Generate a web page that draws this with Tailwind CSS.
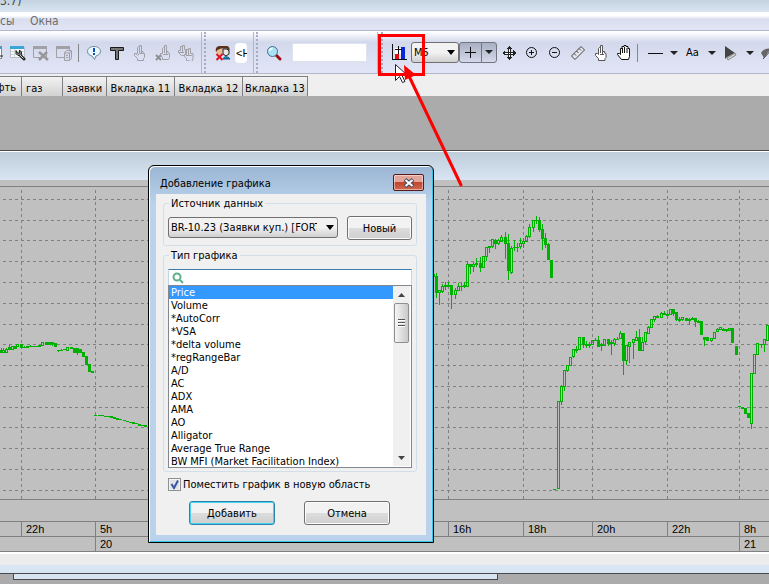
<!DOCTYPE html>
<html lang="ru">
<head>
  <meta charset="UTF-8" />
  <title>Добавление графика</title>
  <script src="https://cdn.jsdelivr.net/npm/@tailwindcss/browser@4"></script>
</head>
<body class="relative min-h-screen overflow-hidden flex flex-col bg-[#ababab] text-black text-[11px] leading-[13px] font-['DejaVu_Sans_Condensed','Noto_Sans',sans-serif]">

  <!-- Title bar -->
  <header class="h-3 overflow-hidden bg-linear-to-b from-[#c4d2e0] to-[#d9e6f1] text-[#444]">
    <span class="block -mt-[7px] text-[12px] leading-4">3.7)</span>
  </header>

  <!-- Menu -->
  <nav class="h-[19px] flex items-center gap-4 pt-px border-b border-[#b3b7cc] bg-linear-to-b from-white from-20% via-[#d9deef] via-40% to-[#e2e5f5] text-[12px] text-[#6d6d6d]">
    <a href="#" class="w-3.5">сы</a>
    <a href="#">Окна</a>
  </nav>

  <!-- Toolbars -->
  <div class="h-[43px] flex border-t border-b border-t-white border-b-[#b3b7cc] bg-linear-to-b from-white from-0% via-[#d3d9ec] via-25% to-[#e1e5f6]">
    <div class="w-[202px] shrink-0 flex items-center overflow-hidden border-r border-[#b3b7cc]">
      <button class="-ml-[17px] w-[23px] h-6 shrink-0 flex items-center justify-center" aria-label="Таблица">
        <svg width="16" height="16"><rect x="1.500" y="1.500" width="13" height="12" fill="#fff" stroke="#888" /><path d="M1 2h14v2H1z" fill="#3aa0d8" /><path d="M12 7v8M9 11h7" stroke="#222" stroke-width="1" /></svg>
      </button>
      <button class="w-[23px] h-6 shrink-0 flex items-center justify-center" aria-label="Настройка таблицы">
        <svg width="16" height="16"><path d="M.5 2.500h14v10H.5z" fill="#f6f8fa" stroke="#b8bfc8" /><path d="M0 1h14v3H0z" fill="#3aa5d8" /><path d="M1 6.500h13M1 9.500h13M4.500 4v8" stroke="#cfd6dd" /><path d="M10 10l4 4" stroke="#222" stroke-width="3" stroke-linecap="round" /><path d="M6 5.500v3l2 2h2.500l1-1.500V7L9.500 5v3h-2z" fill="#777" stroke="#222" /><path d="M10 10l3.500 3.500" stroke="#ccc" /></svg>
      </button>
      <button class="w-[23px] h-6 shrink-0 flex items-center justify-center" aria-label="Удалить окно" disabled>
        <svg width="16" height="16"><path d="M.5 2.500h13v10H.5z" fill="none" stroke="#a0a0a6" /><path d="M0 1h14v3H0z" fill="#a0a0a6" /><path d="M6 7l9 8M14 7l-8 8" stroke="#97979d" stroke-width="2.500" /></svg>
      </button>
      <button class="w-[23px] h-6 shrink-0 flex items-center justify-center" aria-label="База данных" disabled>
        <svg width="16" height="16"><path d="M.5 2.500h13v10H.5z" fill="none" stroke="#a0a0a6" /><path d="M0 1h14v3H0z" fill="#a0a0a6" /><path d="M8.500 7.500l2-2h5v8l-2 2h-5z" fill="#d5daea" stroke="#a0a0a6" /><path d="M8.500 8h5v7M13.500 8l2-2M10 10.500h2M10 12.500h2" fill="none" stroke="#a0a0a6" /></svg>
      </button>
      <span class="mx-[3px] w-px h-[18px] shrink-0 bg-[#85878f]"></span>
      <button class="w-[23px] h-6 shrink-0 flex items-center justify-center" aria-label="Сообщение">
        <svg width="16" height="16"><path d="M8 1.500c3.800 0 6.500 2 6.500 4.800 0 2.600-2 4-4.500 4.700L8.500 14.500 6 11C3.500 10.400 1.500 9 1.500 6.300 1.500 3.500 4.200 1.500 8 1.500z" fill="#e9f6fc" stroke="#6f8896" /><path d="M7 3h2v4H7zM7 8h2v2H7z" fill="#0a50c0" /></svg>
      </button>
      <button class="w-[23px] h-6 shrink-0 flex items-center justify-center" aria-label="Текст">
        <svg width="16" height="16"><path d="M1.500 2.500h13v3h-5v9h-3v-9h-5z" fill="#777" stroke="#1a1a1a" /></svg>
      </button>
      <button class="w-[23px] h-6 shrink-0 flex items-center justify-center" aria-label="Жест" disabled>
        <svg width="16" height="16" fill="none" stroke="#a0a0a6"><path d="M5.500 15.500v-2l-3-3V8.500h2v1l1-1v-6l1-1h1v5-6h2v6h1.500V8l1.500.5v4l-1 1v2zM7.500 3v5M9.500 6v3M5.500 10.500l2-2h4" /></svg>
      </button>
      <button class="w-[23px] h-6 shrink-0 flex items-center justify-center" aria-label="Отменить жест" disabled>
        <svg width="16" height="16" fill="none" stroke="#a0a0a6"><path d="M7.500 14.500v-2l-2-2V8.500h2v-5l1-1h1v4-6h2v6h1.500V8l1.500.5v4l-1 2zM9.500 3v5M11.500 6v3M8 9.500h5" /><path d="M1 10l5 5M6 10l-5 5" stroke="#8f8f95" stroke-width="2" /></svg>
      </button>
      <button class="w-[23px] h-6 shrink-0 flex items-center justify-center" aria-label="Все жесты" disabled>
        <svg width="16" height="16" fill="none" stroke="#a0a0a6"><path d="M3.500 10.500l-3-3V5.500h2v-4h2v3-4h2v4h1v4l-1 2zM4.500 3v4M1 7.500h5" /><path d="M8.500 15.500v-2l-2-2v-2h2v-5h2v3-4h2v5h2.500v5l-1 3zM10.500 7v3M8 10.500h6" /></svg>
      </button>
    </div>

    <div class="w-[52px] shrink-0 flex items-center border-r border-[#b3b7cc]">
      <span class="ml-[2px] mr-[7px] h-full border-l-2 border-dotted border-[#a5abc2]"></span>
      <button class="w-5 h-6 shrink-0 flex items-center justify-center" aria-label="Удалить пользователя">
        <svg width="16" height="16"><circle cx="4.500" cy="6" r="3.500" fill="#edbd92" /><path d="M1 7C0 3 2 1 5 1h6c3 0 4 2 3.500 5L12 3.500H6L2.500 5z" fill="#5a301c" /><path d="M8 4h4l2 2v3l-3 2-3-2z" fill="#e8e4df" stroke="#222" /><path d="M8 14c1-3 5-3 7 0z" fill="#1489c0" stroke="#0a5a85" /><path d="M1.500 9l6 6M7.500 9l-6 6" stroke="#e01020" stroke-width="2" /></svg>
      </button>
      <span class="ml-[2px] w-3 h-5 shrink-0 rounded-sm bg-white pl-px overflow-hidden whitespace-nowrap leading-5 font-['Liberation_Sans',sans-serif]">&lt;Н</span>
    </div>

    <div class="w-[124px] shrink-0 flex items-center border-r border-[#b3b7cc]">
      <span class="ml-[2px] mr-2 h-full border-l-2 border-dotted border-[#a5abc2]"></span>
      <button class="w-4 h-6 shrink-0 flex items-center justify-center" aria-label="Поиск">
        <svg width="16" height="16"><path d="M10 10l4 4" stroke="#9b1010" stroke-width="3" stroke-linecap="round" /><circle cx="6.500" cy="6.500" r="5" fill="#a9e4f5" stroke="#4a6a90" /><path d="M3.500 6a3 3 0 0 1 3-2.500" fill="none" stroke="#fff" stroke-width="1.500" /></svg>
      </button>
      <input type="text" aria-label="Поиск" class="ml-[10px] w-[75px] h-[19px] min-w-0 border border-[#dfe3ef] bg-white" />
    </div>

    <div class="flex-1 min-w-0 flex items-center overflow-hidden">
      <span class="ml-[3px] mr-2 h-full border-l-2 border-dotted border-[#a5abc2]"></span>
      <button class="w-4 h-6 shrink-0 flex items-center justify-center" aria-label="Добавить график">
        <svg width="16" height="17" shape-rendering="crispEdges"><path d="M1 0v15h15" fill="none" stroke="#111" /><path d="M4 9h4v6H4z" fill="#e01010" /><path d="M10 3h4v12h-4z" fill="#0828d8" /><path d="M4 4h6v6H4z" fill="#fff" /><path d="M7.500 2v8M4 5.500h7" stroke="#111" /></svg>
      </button>
      <span class="relative ml-[4px] w-[48px] h-[21px] shrink-0">
        <select aria-label="Интервал" class="appearance-none w-full h-full rounded-[3px] border border-[#707070] bg-linear-to-b from-[#f2f2f2] from-50% to-[#cfcfcf] pl-[2px] text-[11px]">
          <option>M5</option>
        </select>
        <svg class="absolute right-1 top-2 pointer-events-none" width="8" height="5"><path d="M0 0h8L4 5z" /></svg>
      </span>
      <button class="w-[23px] h-[21px] shrink-0 flex items-center justify-center rounded-l-[3px] border border-[#70757f] bg-linear-to-b from-[#a9b0c3] to-[#d3d9ea]" aria-label="Перекрестие">
        <svg width="11" height="11" shape-rendering="crispEdges"><path d="M5.500 0v11M0 5.500h11" stroke="#111" /></svg>
      </button>
      <button class="-ml-px w-4 h-[21px] shrink-0 flex items-center justify-center rounded-r-[3px] border border-[#70757f] bg-linear-to-b from-[#a9b0c3] to-[#d3d9ea]" aria-label="Виды курсора">
        <svg width="8" height="5"><path d="M0 0h8L4 4z" fill="#222" /></svg>
      </button>
      <button class="w-[23px] h-6 shrink-0 flex items-center justify-center" aria-label="Переместить">
        <svg width="14" height="14" shape-rendering="crispEdges"><path d="M6 2h2v10H6zM2 6h10v2H2z" fill="#fff" stroke="#222" stroke-width="1" /><path d="M7 0l3 3H4zM7 14l3-3H4zM0 7l3-3v6zM14 7l-3-3v6z" fill="#222" /></svg>
      </button>
      <button class="w-[23px] h-6 shrink-0 flex items-center justify-center" aria-label="Увеличить">
        <svg width="13" height="13" fill="none" stroke="#111"><circle cx="6.500" cy="6.500" r="5" /><path d="M6.500 4v5M4 6.500h5" /></svg>
      </button>
      <button class="w-[23px] h-6 shrink-0 flex items-center justify-center" aria-label="Уменьшить">
        <svg width="13" height="13" fill="none" stroke="#111"><circle cx="6.500" cy="6.500" r="5" /><path d="M4 6.500h5" /></svg>
      </button>
      <button class="w-[23px] h-6 shrink-0 flex items-center justify-center" aria-label="Линейка">
        <svg width="16" height="16" fill="#e4e6ee" stroke="#444"><path d="M1.500 11L11 1.500 14.500 5 5 14.500zM4 8.500l2 2M6.500 6l2 2M9 3.500l2 2" /></svg>
      </button>
      <button class="w-[23px] h-6 shrink-0 flex items-center justify-center" aria-label="Указать">
        <svg width="16" height="16" fill="#fff" stroke="#555"><path d="M5.500 15.500v-2l-3-3V8.500h2l1 1v-6l1-1h1v4-6h2v6h2V8l1.500.5v4l-1 1v2zM7.500 3v5M9.500 6v3M7 9.500h4" /></svg>
      </button>
      <button class="w-[23px] h-6 shrink-0 flex items-center justify-center" aria-label="Рука">
        <svg width="16" height="16" fill="#fff" stroke="#111"><path d="M5.500 14.500l-4-5v-1h2l1 1v-6h1.500v-2H8v-1h2v1h2v2h1.500v8l-1 3zM6.500 3v5M8.500 2v6M11 3v5" /></svg>
      </button>
      <span class="ml-[2px] mr-[5px] w-px h-[18px] shrink-0 bg-[#85878f]"></span>
      <button class="w-[38px] h-6 shrink-0 flex items-center" aria-label="Линия">
        <svg width="38" height="16"><path d="M5 8.500h15" stroke="#111" /><path d="M27 6h8l-4 4z" fill="#222" /></svg>
      </button>
      <button class="w-[38px] h-6 shrink-0 flex items-center pl-[5px]" aria-label="Шрифт">
        <span class="w-[22px] text-left">Aa</span>
        <svg width="8" height="4"><path d="M0 0h8L4 4z" fill="#222" /></svg>
      </button>
      <button class="w-[38px] h-6 shrink-0 flex items-center" aria-label="Фигура">
        <svg width="38" height="16"><path d="M6 1l10 7-8 4-2 2z" fill="#444" /><path d="M8 13l8-5 1 2-8 5z" fill="#d4d4d4" stroke="#888" /><path d="M27 6h8l-4 4z" fill="#222" /></svg>
      </button>
      <button class="w-[38px] h-6 shrink-0 flex items-center" aria-label="Скрыть">
        <svg width="38" height="16"><path d="M4 8c3-5 9-6 14-2l-3 1c-2-1-4-1-5 2l-3 4z" fill="#666" /><path d="M6 14L16 3" stroke="#444" /></svg>
      </button>
    </div>
  </div>

  <!-- Workspace tabs -->
  <div class="flex pt-[2px] bg-[#efefef]">
    <button class="w-[21px] h-5 pt-1 pr-[5px] flex justify-end border-t border-[#7c7e84] bg-linear-to-b from-[#f2f2f2] to-[#d2d2d2] overflow-hidden">фть</button>
    <button class="w-[41px] h-5 pt-1 pl-1 text-left border-t border-l border-[#7c7e84] bg-linear-to-b from-[#f2f2f2] to-[#d2d2d2]">газ</button>
    <button class="w-11 h-5 pt-1 border-t border-l border-[#7c7e84] bg-linear-to-b from-[#f2f2f2] to-[#d2d2d2] whitespace-nowrap">заявки</button>
    <button class="w-[68px] h-5 pt-1 border-t border-l border-[#7c7e84] bg-linear-to-b from-[#f2f2f2] to-[#d2d2d2] whitespace-nowrap">Вкладка 11</button>
    <button class="w-[68px] h-5 pt-1 border-t border-l border-[#7c7e84] bg-linear-to-b from-[#f2f2f2] to-[#d2d2d2] whitespace-nowrap">Вкладка 12</button>
    <button class="w-[66px] h-5 pt-1 border-t border-x border-[#7c7e84] bg-linear-to-b from-[#f2f2f2] to-[#d2d2d2] whitespace-nowrap">Вкладка 13</button>
  </div>

  <!-- Chart window -->
  <main class="mt-[54px] border-y border-[#4a4a4e] bg-[#c0c0c0]">
    <div class="h-[29px] border-t border-white bg-linear-to-b from-[#bfcddb] to-[#d9e5f3]"></div>
    <svg class="block w-full h-[319px]" shape-rendering="crispEdges">
      <path d="M0 6.500h4000" stroke="#808080" />
      <g id="grid" stroke="#808080" stroke-dasharray="3 3"></g>
      <g id="candles" transform="translate(0 -180)" fill="#00b000"></g>
    </svg>
    <div class="h-[23px] border-y border-[#808080]"></div>
    <div class="flex h-[15px] border-b border-[#808080] font-['Liberation_Sans',sans-serif] text-[11px] leading-[15px]">
      <span class="w-[21px] shrink-0"></span>
      <span class="w-[74px] shrink-0 border-l border-[#808080] pl-1">22h</span>
      <span class="w-[353px] shrink-0 border-l border-[#808080] pl-1">5h</span>
      <span class="w-[75px] shrink-0 border-l border-[#808080] pl-1">16h</span>
      <span class="w-[69px] shrink-0 border-l border-[#808080] pl-1">18h</span>
      <span class="w-[75px] shrink-0 border-l border-[#808080] pl-1">20h</span>
      <span class="w-[72px] shrink-0 border-l border-[#808080] pl-1">22h</span>
      <span class="flex-1 border-l border-[#808080] pl-1">8h</span>
    </div>
    <div class="flex h-[15px] border-b border-[#808080] font-['Liberation_Sans',sans-serif] text-[11px] leading-[15px]">
      <span class="w-[95px] shrink-0"></span>
      <span class="w-[644px] shrink-0 border-l border-[#808080] pl-1">20</span>
      <span class="flex-1 border-l border-[#808080] pl-1">21</span>
    </div>
    <div class="h-[13px] border-t-2 border-white bg-[#ececec]"></div>
    <div class="h-2 bg-[#d8e5f2]"></div>
  </main>
  <div class="ml-[13px] w-[485px] h-[6px] border border-t-0 border-[#4a4a4e] bg-[#d8e5f2]"></div>

  <!-- Add chart dialog -->
  <section role="dialog" aria-labelledby="dialogTitle" class="absolute left-[148px] top-[165px] w-[286px] rounded-t-md border border-black bg-[#bad2eb] bg-linear-to-b from-[#9ab5d3] from-0% via-[#bad2eb] via-10% to-[#bad2eb] shadow-[inset_1px_1px_0_#fff,inset_-1px_-1px_0_#35c8e8] px-[7px] pb-[7px]">
    <div class="h-7 flex items-center justify-between pl-1 pr-[2px] pt-[5px]">
      <h1 id="dialogTitle" class="pt-px text-[11px]">Добавление графика</h1>
      <button aria-label="Закрыть" class="w-[31px] h-[17px] flex items-center justify-center rounded-[2px] border border-[#5a1a18] bg-linear-to-b from-[#e3a59a] from-45% via-[#c4432c] via-50% to-[#cf6a50] shadow-[inset_0_0_0_1px_#ffffff77]">
        <svg width="12" height="10"><path d="M2 1.500l8 7M10 1.500l-8 7" stroke="#444a60" stroke-width="4" /><path d="M2.500 2l7 6M9.500 2l-7 6" stroke="#fff" stroke-width="2" /></svg>
      </button>
    </div>

    <form class="h-[341px] bg-[#f0f0f0] pl-[7px] pr-[9px] pt-[3px]">
      <fieldset class="h-[49px] px-1 rounded-[3px] border border-[#d3dfe8]">
        <legend class="px-[2px] ml-px">Источник данных</legend>
        <div class="flex items-start justify-between pt-[6px]">
          <span class="relative mt-px w-[170px] h-[21px]">
            <select aria-label="Источник данных" class="appearance-none w-full h-full rounded-[3px] border border-[#707070] bg-linear-to-b from-[#f2f2f2] from-50% to-[#cfcfcf] pl-[2px] pr-5 text-[11px] whitespace-nowrap overflow-hidden">
              <option>BR-10.23 (Заявки куп.) [FORTS]</option>
            </select>
            <svg class="absolute right-1 top-2 pointer-events-none" width="8" height="5"><path d="M0 0h8L4 5z" /></svg>
          </span>
          <button type="button" class="w-[65px] h-6 rounded-[3px] border border-[#707070] bg-linear-to-b from-[#f2f2f2] from-50% via-[#dddddd] via-50% to-[#cfcfcf] shadow-[inset_0_0_0_1px_#fcfcfc]">Новый</button>
        </div>
      </fieldset>

      <fieldset class="mt-[3px] h-[223px] px-1 rounded-[3px] border border-[#d3dfe8]">
        <legend class="px-[2px] ml-px">Тип графика</legend>
        <div class="pt-[7px]">
          <label class="flex items-center h-4 pl-[3px] border border-b-0 border-[#c4d5e6] border-t-[#3d7bad] bg-white">
            <svg width="12" height="12"><circle cx="5" cy="5" r="3.500" fill="none" stroke="#5fb08c" stroke-width="2" /><path d="M8 8l3 3" stroke="#5fb08c" stroke-width="2" /></svg>
            <input type="text" aria-label="Поиск типа графика" class="flex-1 min-w-0 h-3 outline-none" />
          </label>
          <div class="flex h-[183px] border border-[#828790] bg-white">
            <ul role="listbox" aria-label="Тип графика" class="flex-1 min-w-0 overflow-hidden whitespace-nowrap">
              <li role="option" aria-selected="true" class="pl-[2px] bg-[#3399ff] text-white">Price</li>
              <li role="option" class="pl-[2px]">Volume</li>
              <li role="option" class="pl-[2px]">*AutoCorr</li>
              <li role="option" class="pl-[2px]">*VSA</li>
              <li role="option" class="pl-[2px]">*delta volume</li>
              <li role="option" class="pl-[2px]">*regRangeBar</li>
              <li role="option" class="pl-[2px]">A/D</li>
              <li role="option" class="pl-[2px]">AC</li>
              <li role="option" class="pl-[2px]">ADX</li>
              <li role="option" class="pl-[2px]">AMA</li>
              <li role="option" class="pl-[2px]">AO</li>
              <li role="option" class="pl-[2px]">Alligator</li>
              <li role="option" class="pl-[2px]">Average True Range</li>
              <li role="option" class="pl-[2px]">BW MFI (Market Facilitation Index)</li>
            </ul>
            <div class="w-[17px] mb-px mr-px flex flex-col items-center bg-[#f0f0f0]">
              <svg class="shrink-0" width="17" height="17"><path d="M5 11h7l-3.500-4z" fill="#444" /></svg>
              <div class="w-[15px] h-10 shrink-0 flex flex-col items-center justify-center gap-px rounded-[2px] border border-[#8f8f8f] bg-linear-to-r from-[#f5f5f5] to-[#c9c9cb]">
                <span class="w-[7px] h-[2px] border-t border-[#555] bg-white"></span>
                <span class="w-[7px] h-[2px] border-t border-[#555] bg-white"></span>
                <span class="w-[7px] h-[2px] border-t border-[#555] bg-white"></span>
              </div>
              <svg class="mt-auto shrink-0" width="17" height="17"><path d="M5 7h7l-3.500 4z" fill="#444" /></svg>
            </div>
          </div>
        </div>
      </fieldset>

      <label class="relative mt-[6px] ml-[5px] flex items-center gap-[2px] whitespace-nowrap">
        <input type="checkbox" checked class="appearance-none w-[13px] h-[13px] border border-[#8e8f8f] bg-[#dfe3e8] shadow-[inset_0_0_0_1px_#f4f4f4]" />
        <svg class="absolute left-0 top-0 pointer-events-none" width="13" height="13"><path d="M3.500 6l2.500 4 4-7.500" fill="none" stroke="#3b55a0" stroke-width="2" /></svg>
        Поместить график в новую область
      </label>

      <div class="flex gap-[29px] mt-[10px] ml-[26px]">
        <button type="submit" class="w-[86px] h-6 shrink-0 rounded-[3px] border border-[#2a87a8] bg-linear-to-b from-[#f2f2f2] from-50% via-[#dddddd] via-50% to-[#cfcfcf] shadow-[inset_0_0_0_1px_#48d0f5]">Добавить</button>
        <button type="button" class="w-[86px] h-6 shrink-0 rounded-[3px] border border-[#707070] bg-linear-to-b from-[#f2f2f2] from-50% via-[#dddddd] via-50% to-[#cfcfcf] shadow-[inset_0_0_0_1px_#fcfcfc]">Отмена</button>
      </div>
    </form>
  </section>

  <!-- Pointer and red marker over the toolbar -->
  <svg class="absolute left-0 top-0 w-full h-[200px] pointer-events-none">
    <path d="M395.500 64.500v16l4-4 3 6 2.500-1-3-6h5.500z" fill="#fff" stroke="#223" />
    <rect x="379.500" y="35.500" width="44" height="39" fill="none" stroke="#f00" stroke-width="3" />
    <path d="M461 185L408 74" stroke="#f00" stroke-width="3" stroke-linecap="round" />
    <path d="M404 65l12 10-11 5z" fill="#f00" />
  </svg>

  <script>
    const SVG = 'http://www.w3.org/2000/svg';
    const grid = document.getElementById('grid');
    const candles = document.getElementById('candles');

    function addPath(parent, d) {
      const path = document.createElementNS(SVG, 'path');
      path.setAttribute('d', d);
      parent.appendChild(path);
    }

    [199, 220, 240, 261, 282, 303, 324, 344, 365, 386, 407, 427, 448, 469, 490].forEach(y => {
      addPath(grid, `M3 ${y - 179.5}H4000`);
    });
    [21, 95, 448, 523, 592, 667, 739].forEach(x => {
      addPath(grid, `M${x + 0.5} 10V319`);
    });

    // x, high, top, bottom, low, filled
    const data = [
      [0,348,350,352,352,1],[2,348,350,352,352,0],[5,348,349,352,352,0],[8,345,347,349,349,1],[11,346,346,349,349,0],[14,346,346,348,348,1],[16,344,344,346,346,0],
      [20,344,344,347,347,1],[23,346,347,347,347,0],[26,346,346,347,347,1],[29,345,346,346,346,0],[32,346,346,346,346,0],[35,346,346,346,346,0],
      [38,345,345,346,346,0],[41,342,342,345,345,0],[45,342,342,344,344,1],[48,342,342,344,344,1],[51,342,342,343,345,1],[54,343,343,346,346,1],
      [57,350,350,350,351,0],[60,349,350,350,350,0],[63,349,349,349,349,0],[66,347,347,350,350,0],[70,347,347,348,348,1],[73,348,348,352,352,1],
      [76,348,348,352,354,1],[79,349,349,352,352,1],[82,352,352,356,356,1],[85,356,356,364,364,1],[88,364,364,371,371,1],[91,371,371,372,372,1],
      [94,415,415,415,415,0],[98,415,415,415,415,0],[101,415,415,415,415,0],[104,416,416,416,416,0],[107,416,416,416,416,0],[110,416,416,417,417,1],[113,417,417,418,418,1],
      [116,418,418,419,419,1],[119,419,419,419,419,0],[123,420,420,420,420,0],[126,421,421,421,421,0],[129,422,422,422,422,0],[132,422,422,423,423,1],[135,423,423,423,423,0],
      [138,424,424,425,425,1],[141,425,425,425,425,0],[144,425,425,426,426,1],
      [432,272,274,276,276,1],[435,273,276,292,297,1],[438,290,290,292,304,0],[441,284,286,291,292,0],[444,282,285,286,289,0],[447,282,285,286,286,0],[450,285,285,294,308,1],
      [454,288,290,294,298,0],[457,283,286,290,290,0],[460,283,286,286,290,0],[463,282,285,286,287,0],[466,261,264,286,286,0],[469,264,264,266,273,1],[472,262,264,266,271,0],
      [475,258,263,264,266,0],[479,257,263,267,271,1],[482,256,256,267,267,0],[485,247,247,256,260,0],[488,246,246,247,252,0],[491,239,239,246,247,0],[494,239,240,243,248,1],
      [497,239,240,243,244,0],[500,235,237,241,241,0],[504,232,237,243,258,1],[507,234,243,270,279,1],[510,246,248,272,273,0],[513,240,247,247,250,0],[516,243,247,247,251,0],
      [519,238,243,246,248,0],[522,238,241,243,247,0],[525,235,236,241,241,0],[528,224,227,236,237,0],[532,220,220,227,231,0],[535,216,220,220,223,0],[538,217,220,229,231,1],
      [541,224,229,238,249,1],[544,233,238,244,247,1],[547,243,244,259,259,1],[550,260,260,277,277,1],
      [553,489,489,489,489,0],[557,401,401,488,488,0],[560,385,386,401,404,0],[563,370,370,386,390,0],[566,365,365,370,371,0],[569,357,357,365,365,0],[572,349,349,356,357,0],
      [575,346,349,350,352,0],[578,337,337,349,349,0],[582,337,337,344,347,1],[585,341,344,345,347,0],[588,342,344,345,347,0],[591,340,340,344,344,0],[594,338,340,340,340,0],
      [597,336,340,346,346,1],[600,343,344,345,350,0],[603,339,339,345,345,0],[607,339,339,343,345,1],[610,340,342,343,354,0],[613,338,339,343,345,0],[616,337,339,339,339,0],
      [619,331,333,338,338,0],[622,333,333,360,374,1],[625,345,345,360,364,0],[628,342,342,346,362,0],[632,339,339,342,358,0],[635,331,337,340,340,0],[638,329,337,350,350,1],
      [641,337,342,350,350,0],[644,332,332,341,344,0],[647,326,327,333,333,0],[650,319,319,327,327,0],[653,316,316,319,321,0],[656,315,316,317,317,0],[660,312,313,317,317,0],
      [663,311,313,314,314,0],[666,313,314,315,315,0],[669,309,309,314,314,0],[672,309,309,313,315,1],[675,312,312,319,320,1],[678,317,319,320,321,0],[681,317,317,319,320,0],
      [685,318,318,320,320,1],[688,318,319,320,324,0],[691,317,318,319,319,0],[694,318,318,321,326,1],[697,320,321,322,322,1],[700,321,321,334,334,1],[703,337,337,339,345,1],
      [706,337,337,340,340,1],[710,338,338,340,341,0],[713,332,332,338,338,0],[716,328,329,331,331,0],[719,327,327,329,329,0],[722,328,329,330,330,0],[725,329,329,330,331,0],
      [728,328,328,330,330,0],[731,328,328,342,342,1],[735,346,346,354,354,1],[738,406,406,406,406,0],[741,407,407,408,408,1],[744,408,408,413,413,1],[747,413,413,417,417,1],
      [750,373,373,423,428,0],[753,354,354,373,373,0],[756,343,343,354,354,0],[760,344,344,344,347,0],[763,339,339,344,351,0],[766,325,325,340,340,0]
    ];

    data.forEach(([x, high, top, bottom, low, filled]) => {
      let d = `M${x + 1} ${high}h1V${top}h-1zM${x + 1} ${bottom}h1V${low + 1}h-1z`;
      d += `M${x} ${top}h3V${bottom + 1}h-3z`;
      if (!filled && bottom - top > 1) {
        d += `M${x + 1} ${top + 1}V${bottom}h1V${top + 1}z`;
      }
      addPath(candles, d);
    });
  </script>
</body>
</html>
